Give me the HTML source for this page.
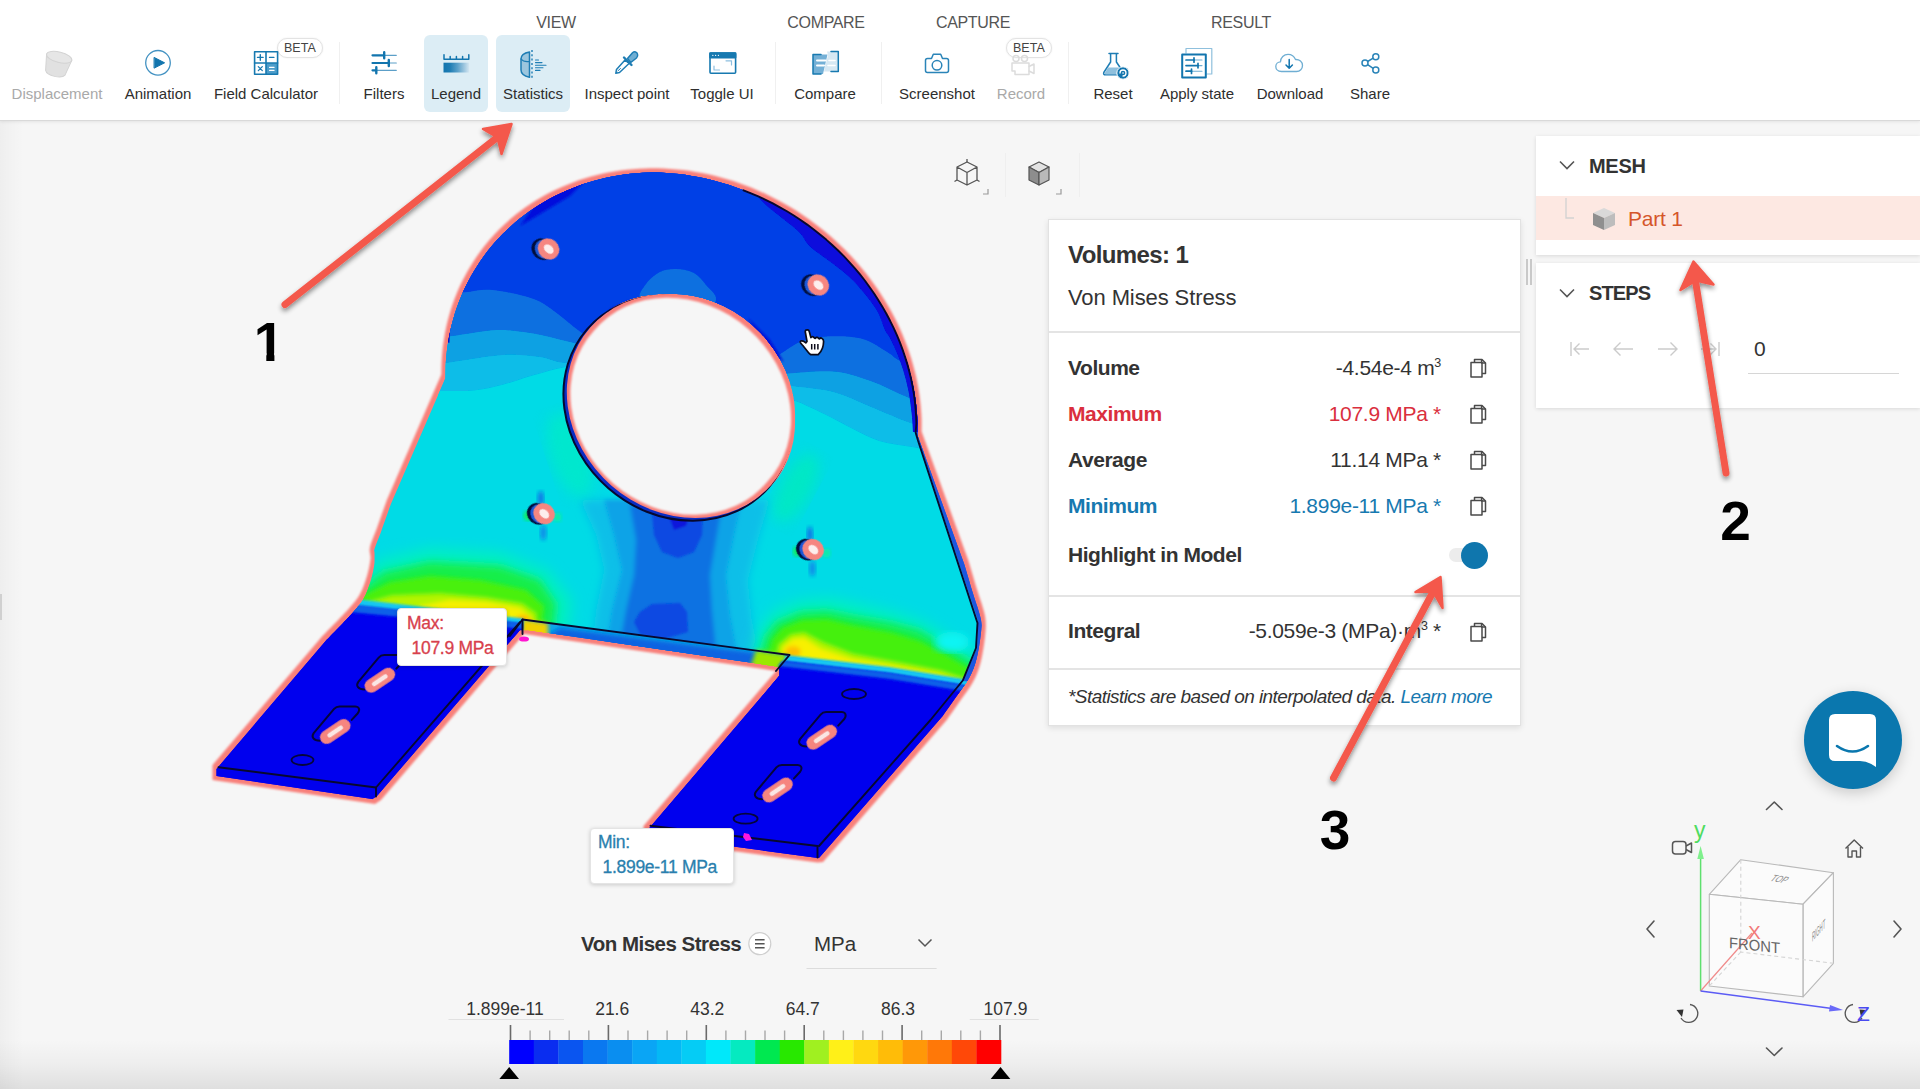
<!DOCTYPE html>
<html lang="en">
<head>
<meta charset="utf-8">
<title>Statistics - Von Mises Stress</title>
<style>
*{box-sizing:border-box;margin:0;padding:0}
html,body{width:1920px;height:1089px;overflow:hidden}
body{position:relative;background:#f6f6f6;font-family:"Liberation Sans",Arial,sans-serif;color:#333}
.abs{position:absolute}
#bgfade{position:absolute;left:0;top:0;width:1920px;height:1089px;
 background:linear-gradient(to bottom,rgba(0,0,0,0) 0,rgba(0,0,0,0) 1040px,rgba(0,0,0,.035) 1065px,rgba(0,0,0,.095) 1089px),
 linear-gradient(to right,rgba(0,0,0,.03) 0,rgba(0,0,0,.012) 14px,rgba(0,0,0,0) 24px)}
/* toolbar */
#tb{position:absolute;left:0;top:0;width:1920px;height:121px;background:#fff;border-bottom:1px solid #d9d9d9;box-shadow:0 1px 3px rgba(0,0,0,.08)}
.gt{position:absolute;top:13px;font-size:16px;line-height:20px;color:#555;letter-spacing:-.35px;white-space:nowrap;transform:translateX(-50%)}
.tl{position:absolute;top:84px;font-size:15px;line-height:20px;color:#2e2e2e;white-space:nowrap;transform:translateX(-50%)}
.tl.dis{color:#a9a9a9}
.sep{position:absolute;top:42px;width:1px;height:62px;background:#f0f0f0}
.hl{position:absolute;top:35px;height:77px;background:#dcedf5;border-radius:6px}
.beta{position:absolute;height:20px;border:1px solid #e3e3e3;border-radius:10px;background:#fff;font-size:12.5px;line-height:18px;color:#444;padding:0 6px;box-shadow:0 0 2px rgba(0,0,0,.08)}
.ico{position:absolute}
</style>
</head>
<body>
<div id="bgfade"></div>

<!-- ============ TOOLBAR ============ -->
<div id="tb">
  <div class="gt" style="left:556px">VIEW</div>
  <div class="gt" style="left:826px">COMPARE</div>
  <div class="gt" style="left:973px">CAPTURE</div>
  <div class="gt" style="left:1241px">RESULT</div>

  <div class="hl" style="left:424px;width:64px"></div>
  <div class="hl" style="left:496px;width:74px"></div>

  <div class="sep" style="left:339px"></div>
  <div class="sep" style="left:775px"></div>
  <div class="sep" style="left:881px"></div>
  <div class="sep" style="left:1068px"></div>

  <div class="tl dis" style="left:57px">Displacement</div>
  <div class="tl" style="left:158px">Animation</div>
  <div class="tl" style="left:266px">Field Calculator</div>
  <div class="tl" style="left:384px">Filters</div>
  <div class="tl" style="left:456px">Legend</div>
  <div class="tl" style="left:533px">Statistics</div>
  <div class="tl" style="left:627px">Inspect point</div>
  <div class="tl" style="left:722px">Toggle UI</div>
  <div class="tl" style="left:825px">Compare</div>
  <div class="tl" style="left:937px">Screenshot</div>
  <div class="tl dis" style="left:1021px">Record</div>
  <div class="tl" style="left:1113px">Reset</div>
  <div class="tl" style="left:1197px">Apply state</div>
  <div class="tl" style="left:1290px">Download</div>
  <div class="tl" style="left:1370px">Share</div>
  <div class="beta" style="left:277px;top:38px">BETA</div>
<div class="beta" style="left:1006px;top:38px">BETA</div>
<svg class="abs" style="left:0;top:30px" width="1420" height="60" viewBox="0 30 1420 60" fill="none" stroke-linejoin="round" stroke-linecap="round">
  <!-- Displacement (disabled) -->
  <g transform="rotate(14 57.500 64)">
    <path d="M44.500 57 L47.500 73 C50 78 65 78 67.500 73 L70.500 57Z" fill="#e1e1e1" stroke="#d3d3d3" stroke-width="1"/>
    <ellipse cx="57.500" cy="57" rx="13" ry="5.200" fill="#e6e6e6" stroke="#d3d3d3" stroke-width="1"/>
  </g>
  <!-- Animation -->
  <circle cx="158" cy="62.800" r="12.300" stroke="#4392c2" stroke-width="1.300" fill="#fff"/>
  <path d="M154.400 57.600 L164.600 62.800 L154.400 68Z" fill="#1275ae" stroke="#1275ae" stroke-width="1"/>
  <!-- Field calculator -->
  <g stroke="#1779b0" stroke-width="1.600">
    <rect x="266" y="63" width="11.600" height="11.300" fill="#4d9dca" stroke="none"/>
    <rect x="254.600" y="51.700" width="23" height="22.600"/>
    <path d="M266 51.700 V74.300 M254.600 63 H277.600"/>
    <path d="M257.500 57.400 h5.600 M260.300 54.600 v5.600 M269.500 57.400 h4.400" stroke-width="1.400"/>
    <path d="M258.300 66.600 l4 4 M262.300 66.600 l-4 4" stroke-width="1.300"/>
    <path d="M269.500 67.300 h4.600 M269.500 70.300 h4.600" stroke="#fff" stroke-width="1.200"/>
  </g>
  <!-- Filters -->
  <g stroke="#1275ae">
    <path d="M384 55.300 H396.300 M389 63 H396.300 M376.500 70.300 H396.300" stroke="#5c9fc8" stroke-width="1.200"/>
    <path d="M372.500 55.300 H384 M372.500 63 H388.500 M372.500 70.300 H376" stroke-width="2.200"/>
    <path d="M384.200 52.300 V58.300 M388.800 60 V66 M376.300 67.300 V73.300" stroke-width="2.400"/>
  </g>
  <!-- Legend -->
  <defs><linearGradient id="lgd" x1="0" x2="1" y1="0" y2="0"><stop offset="0" stop-color="#1275ae"/><stop offset=".25" stop-color="#1e7db4"/><stop offset=".55" stop-color="#5aa0c9"/><stop offset=".85" stop-color="#a9cde3"/><stop offset="1" stop-color="#d3e6f1"/></linearGradient></defs>
  <rect x="443.500" y="62.700" width="25.600" height="9.800" fill="url(#lgd)"/>
  <path d="M444 54.700 V59.300 H468.800 V54.700 M450.200 56.500 V59.300 M456.400 56.500 V59.300 M462.600 56.500 V59.300" stroke="#1275ae" stroke-width="1.500"/>
  <!-- Statistics -->
  <g stroke="#1e7db4">
    <path d="M529.500 52 C524 53 521 56 521 59 V70 C521 73.500 524 76 529.500 77.300Z" fill="#9cc6de" stroke-width="1.500"/>
    <path d="M521 59 C523 61.500 526.500 62 529.500 61.500" stroke-width="1.200"/>
    <path d="M532 50 V80" stroke-width="1.400" stroke-dasharray="2 2.300" stroke-linecap="butt"/>
    <path d="M535.500 60 H538.500 M535.500 62.600 H542 M535.500 65.200 H546 M535.500 67.800 H543 M535.500 70.400 H540" stroke-width="1.100"/>
  </g>
  <!-- Inspect point (eyedropper) -->
  <g stroke="#1e7db4" stroke-width="1.500">
    <path d="M625 60 L616.500 69.500 L615.800 73.300 L619.500 72.500 L629 63.500Z" fill="#fff"/>
    <path d="M618 70.800 L620.500 68.500" stroke-width="1"/>
    <path d="M624 57.500 L631.500 65" stroke-width="2.400"/>
    <path d="M627.500 58.500 L632.500 52.800 C634.500 51 637 52 637.500 54 C638 55.500 637.500 57 636.500 58 L630.800 62.500Z" fill="#6faed3"/>
  </g>
  <!-- Toggle UI -->
  <g stroke="#1779b0" stroke-width="1.600">
    <rect x="710" y="53" width="25.600" height="20.300" rx="1"/>
    <rect x="710" y="53" width="25.600" height="4.600" fill="#1779b0"/>
    <path d="M712.800 55.300 h.1 M715.600 55.300 h.1 M718.400 55.300 h.1" stroke="#fff" stroke-width="1.300"/>
    <path d="M726 60.800 H731.500 V65 M719.500 70 H714 V66" stroke="#8dbfe0" stroke-width="1.200"/>
  </g>
  <!-- Compare -->
  <g stroke="#1779b0" stroke-width="1.500">
    <path d="M827 51.500 H838.300 V71.500 H824 L828 55Z" fill="#d6e8f3" stroke="none"/>
    <path d="M813 54.500 H827.500 L823 74 H813Z" fill="#74b0d6" stroke="none"/>
    <path d="M831 51.500 H838.300 V71.500 H831 M821 74 H813 V54.500 H821"/>
    <path d="M817 60.500 H825.500 M817 65.500 H824" stroke="#fff" stroke-width="2"/>
    <path d="M829 60.500 H835 M828 65.500 H835" stroke="#fff" stroke-width="1.600"/>
  </g>
  <!-- Screenshot -->
  <g stroke="#2a84b8" stroke-width="1.500">
    <path d="M927.500 58.500 H931.500 L933.300 54.300 H940.700 L942.500 58.500 H946.500 Q948.500 58.500 948.500 60.500 V70.500 Q948.500 72.500 946.500 72.500 H927.500 Q925.500 72.500 925.500 70.500 V60.500 Q925.500 58.500 927.500 58.500Z" fill="#fff"/>
    <circle cx="937" cy="65.300" r="4.800"/>
  </g>
  <!-- Record (disabled) -->
  <g stroke="#dcdcdc" stroke-width="1.500">
    <path d="M1012 63 H1029 V74.500 H1015 V71 H1012Z" fill="#fff"/>
    <path d="M1029 66.500 L1034 64 V73.500 L1029 71"/>
    <circle cx="1016" cy="58.500" r="3"/><circle cx="1024.500" cy="58.500" r="3"/>
  </g>
  <!-- Reset -->
  <g stroke="#1e7db4" stroke-width="1.500">
    <path d="M1110.600 54 V62 L1103.800 72.500 Q1103 74.800 1105.500 74.800 H1122 Q1124.500 74.800 1123.500 72.500 L1116.400 62 V54" fill="#fff"/>
    <path d="M1108 67.500 H1119.500 L1123 73.500 L1122 74.500 H1105.500 L1104.500 73.500Z" fill="#8fc0dd" stroke="none"/>
    <path d="M1109 53.600 H1118"/>
    <circle cx="1123" cy="73" r="6.200" fill="#1275ae" stroke="#fff" stroke-width="1"/>
    <path d="M1120 73 A3 3 0 1 1 1123 76" stroke="#fff" stroke-width="1.300"/>
    <path d="M1123 73 h.1" stroke="#fff" stroke-width="1.600"/>
  </g>
  <!-- Apply state -->
  <g>
    <path d="M1186 53 V48.500 H1211.800 V74 H1207" stroke="#8fc0dd" stroke-width="1.200"/>
    <rect x="1182.200" y="54.500" width="23.600" height="23" stroke="#1275ae" stroke-width="2" fill="#fff"/>
    <path d="M1194 60 H1202 M1198.500 65.600 H1202 M1192 71.200 H1202" stroke="#6faed3" stroke-width="1.100"/>
    <path d="M1186 60 H1194 M1186 65.600 H1198 M1186 71.200 H1191.500" stroke="#1275ae" stroke-width="1.700"/>
    <path d="M1194 57.800 V62.200 M1198 63.400 V67.800 M1191.500 69 V73.400" stroke="#1275ae" stroke-width="1.700"/>
  </g>
  <!-- Download -->
  <g>
    <path d="M1281.500 71.500 C1277.500 71.500 1275.800 68.800 1275.800 66.500 C1275.800 63.800 1278 61.800 1280.500 61.800 C1280.500 57.500 1284 54.300 1288 54.300 C1291.500 54.300 1294.300 56.300 1295.500 59.500 C1299.500 59.300 1302.500 62 1302.500 65.500 C1302.500 68.800 1300 71.500 1296.500 71.500Z" stroke="#6faed3" stroke-width="1.300" fill="#fff"/>
    <path d="M1289.200 59.500 V68 M1286 65 L1289.200 68.300 L1292.400 65" stroke="#1275ae" stroke-width="1.500"/>
  </g>
  <!-- Share -->
  <g stroke="#2a84b8" stroke-width="1.500">
    <path d="M1367.600 61.500 L1373.200 58.200 M1367.600 64.600 L1373.200 68.400"/>
    <circle cx="1375.800" cy="56.700" r="3" fill="#fff"/><circle cx="1365" cy="63" r="3" fill="#fff"/><circle cx="1375.800" cy="70" r="3" fill="#fff"/>
  </g>
</svg>

</div>

<svg class="abs" style="left:0;top:0" width="1920" height="1089" viewBox="0 0 1920 1089">
<defs>
<clipPath id="silclip"><path d="M441.3 374.4 C441.4 372.4 441.4 366.3 441.6 362.3 C441.8 358.3 442.1 354.3 442.5 350.3 C442.9 346.3 443.4 342.3 444.1 338.4 C444.7 334.5 445.4 330.6 446.3 326.7 C447.1 322.8 448.1 319.0 449.2 315.2 C450.3 311.4 451.4 307.7 452.7 304.0 C454.0 300.2 455.4 296.6 456.9 293.0 C458.4 289.3 460.0 285.8 461.7 282.3 C463.4 278.8 465.2 275.3 467.1 271.9 C469.0 268.5 471.1 265.2 473.2 261.9 C475.3 258.6 477.5 255.4 479.8 252.3 C482.0 249.1 484.4 246.0 486.9 243.0 C489.4 240.0 492.0 237.1 494.6 234.3 C497.3 231.4 500.0 228.6 502.8 226.0 C505.7 223.3 508.6 220.6 511.6 218.1 C514.6 215.6 517.6 213.2 520.8 210.8 C523.9 208.4 527.1 206.2 530.4 204.0 C533.7 201.8 537.1 199.7 540.5 197.8 C543.9 195.8 547.4 193.9 550.9 192.1 C554.5 190.3 558.1 188.6 561.8 187.0 C565.4 185.4 569.1 183.8 572.9 182.4 C576.7 181.0 580.5 179.7 584.4 178.5 C588.2 177.3 592.2 176.2 596.1 175.2 C600.1 174.3 604.0 173.4 608.1 172.6 C612.1 171.8 616.2 171.1 620.2 170.6 C624.3 170.0 628.4 169.5 632.6 169.2 C636.7 168.8 640.9 168.6 645.1 168.4 C649.2 168.3 653.4 168.2 657.6 168.3 C661.9 168.4 666.1 168.6 670.3 168.9 C674.5 169.1 678.8 169.5 683.0 170.0 C687.2 170.5 691.4 171.2 695.7 171.9 C699.9 172.6 704.1 173.4 708.3 174.3 C712.5 175.3 716.7 176.3 720.9 177.4 C725.0 178.6 729.2 179.8 733.3 181.1 C737.4 182.5 741.5 183.9 745.6 185.5 C749.7 187.0 753.7 188.7 757.7 190.4 C761.7 192.1 765.7 194.0 769.7 195.9 C773.6 197.8 777.5 199.9 781.3 202.0 C785.2 204.1 789.0 206.3 792.7 208.6 C796.5 210.9 800.2 213.3 803.8 215.8 C807.4 218.2 811.0 220.8 814.5 223.4 C818.1 226.1 821.5 228.8 824.9 231.6 C828.3 234.4 831.6 237.3 834.9 240.2 C838.1 243.2 841.3 246.2 844.4 249.3 C847.5 252.4 850.6 255.6 853.5 258.8 C856.5 262.0 859.3 265.3 862.1 268.7 C864.9 272.1 867.6 275.5 870.2 279.0 C872.8 282.4 875.4 286.0 877.8 289.6 C880.2 293.1 882.6 296.8 884.8 300.5 C887.1 304.1 889.2 307.9 891.3 311.6 C893.4 315.4 895.3 319.2 897.2 323.1 C899.0 326.9 900.8 330.8 902.5 334.7 C904.1 338.6 905.7 342.6 907.1 346.5 C908.6 350.5 909.9 354.5 911.2 358.5 C912.4 362.5 913.5 366.5 914.5 370.6 C915.6 374.6 916.5 378.7 917.3 382.8 C918.1 386.8 918.8 390.9 919.4 395.0 C920.0 399.0 920.4 403.1 920.8 407.2 C921.2 411.3 921.4 415.3 921.6 419.4 C921.7 423.5 921.6 429.5 921.6 431.6 L968.2 560.0 C969.7 564.9 974.2 580.2 977.0 589.5 C979.8 598.8 983.7 608.2 985.0 616.0 C986.3 623.8 985.8 628.7 985.0 636.5 C984.2 644.3 982.5 655.4 980.5 663.0 C978.5 670.6 976.4 675.7 973.0 682.0 C969.6 688.3 964.4 694.7 960.0 701.0 C955.6 707.3 948.9 716.8 946.7 720.0 L823.0 862.0 L817.5 862.5 L644.0 839.0 L643.5 826.0 L776.0 671.0 L524.0 634.0 L381.0 800.0 L375.0 804.0 L212.5 780.0 L212.5 765.0 L322.0 636.6 C326.4 632.0 342.2 616.1 348.5 609.0 C354.8 601.9 356.9 599.5 360.0 594.0 C363.1 588.5 365.2 581.8 367.0 576.0 C368.8 570.2 370.0 563.8 370.5 559.0 C371.0 554.2 368.8 552.4 370.0 547.0 C371.2 541.6 374.7 534.2 377.5 526.4 C380.3 518.6 385.3 504.4 386.9 500.0 L441.3 374.4Z M767.5 481.6 A115.0 100.5 41.0 1 0 593.9 330.8 A115.0 100.5 41.0 1 0 767.5 481.6 Z" clip-rule="evenodd"/></clipPath>
<filter id="erode" x="180" y="140" width="840" height="760" filterUnits="userSpaceOnUse"><feMorphology in="SourceAlpha" operator="erode" radius="4.0" result="e"/><feGaussianBlur in="e" stdDeviation="0.6" result="eb"/><feComposite in="SourceGraphic" in2="eb" operator="in"/></filter>
<filter id="b06"><feGaussianBlur stdDeviation="0.7"/></filter>
<filter id="b1"><feGaussianBlur stdDeviation="1.2"/></filter>
<filter id="b2"><feGaussianBlur stdDeviation="2.2"/></filter>
<filter id="b4"><feGaussianBlur stdDeviation="4"/></filter>
<filter id="b7"><feGaussianBlur stdDeviation="7"/></filter>
<filter id="b12"><feGaussianBlur stdDeviation="12"/></filter>
</defs>
<path d="M441.3 374.4 C441.4 372.4 441.4 366.3 441.6 362.3 C441.8 358.3 442.1 354.3 442.5 350.3 C442.9 346.3 443.4 342.3 444.1 338.4 C444.7 334.5 445.4 330.6 446.3 326.7 C447.1 322.8 448.1 319.0 449.2 315.2 C450.3 311.4 451.4 307.7 452.7 304.0 C454.0 300.2 455.4 296.6 456.9 293.0 C458.4 289.3 460.0 285.8 461.7 282.3 C463.4 278.8 465.2 275.3 467.1 271.9 C469.0 268.5 471.1 265.2 473.2 261.9 C475.3 258.6 477.5 255.4 479.8 252.3 C482.0 249.1 484.4 246.0 486.9 243.0 C489.4 240.0 492.0 237.1 494.6 234.3 C497.3 231.4 500.0 228.6 502.8 226.0 C505.7 223.3 508.6 220.6 511.6 218.1 C514.6 215.6 517.6 213.2 520.8 210.8 C523.9 208.4 527.1 206.2 530.4 204.0 C533.7 201.8 537.1 199.7 540.5 197.8 C543.9 195.8 547.4 193.9 550.9 192.1 C554.5 190.3 558.1 188.6 561.8 187.0 C565.4 185.4 569.1 183.8 572.9 182.4 C576.7 181.0 580.5 179.7 584.4 178.5 C588.2 177.3 592.2 176.2 596.1 175.2 C600.1 174.3 604.0 173.4 608.1 172.6 C612.1 171.8 616.2 171.1 620.2 170.6 C624.3 170.0 628.4 169.5 632.6 169.2 C636.7 168.8 640.9 168.6 645.1 168.4 C649.2 168.3 653.4 168.2 657.6 168.3 C661.9 168.4 666.1 168.6 670.3 168.9 C674.5 169.1 678.8 169.5 683.0 170.0 C687.2 170.5 691.4 171.2 695.7 171.9 C699.9 172.6 704.1 173.4 708.3 174.3 C712.5 175.3 716.7 176.3 720.9 177.4 C725.0 178.6 729.2 179.8 733.3 181.1 C737.4 182.5 741.5 183.9 745.6 185.5 C749.7 187.0 753.7 188.7 757.7 190.4 C761.7 192.1 765.7 194.0 769.7 195.9 C773.6 197.8 777.5 199.9 781.3 202.0 C785.2 204.1 789.0 206.3 792.7 208.6 C796.5 210.9 800.2 213.3 803.8 215.8 C807.4 218.2 811.0 220.8 814.5 223.4 C818.1 226.1 821.5 228.8 824.9 231.6 C828.3 234.4 831.6 237.3 834.9 240.2 C838.1 243.2 841.3 246.2 844.4 249.3 C847.5 252.4 850.6 255.6 853.5 258.8 C856.5 262.0 859.3 265.3 862.1 268.7 C864.9 272.1 867.6 275.5 870.2 279.0 C872.8 282.4 875.4 286.0 877.8 289.6 C880.2 293.1 882.6 296.8 884.8 300.5 C887.1 304.1 889.2 307.9 891.3 311.6 C893.4 315.4 895.3 319.2 897.2 323.1 C899.0 326.9 900.8 330.8 902.5 334.7 C904.1 338.6 905.7 342.6 907.1 346.5 C908.6 350.5 909.9 354.5 911.2 358.5 C912.4 362.5 913.5 366.5 914.5 370.6 C915.6 374.6 916.5 378.7 917.3 382.8 C918.1 386.8 918.8 390.9 919.4 395.0 C920.0 399.0 920.4 403.1 920.8 407.2 C921.2 411.3 921.4 415.3 921.6 419.4 C921.7 423.5 921.6 429.5 921.6 431.6 L968.2 560.0 C969.7 564.9 974.2 580.2 977.0 589.5 C979.8 598.8 983.7 608.2 985.0 616.0 C986.3 623.8 985.8 628.7 985.0 636.5 C984.2 644.3 982.5 655.4 980.5 663.0 C978.5 670.6 976.4 675.7 973.0 682.0 C969.6 688.3 964.4 694.7 960.0 701.0 C955.6 707.3 948.9 716.8 946.7 720.0 L823.0 862.0 L817.5 862.5 L644.0 839.0 L643.5 826.0 L776.0 671.0 L524.0 634.0 L381.0 800.0 L375.0 804.0 L212.5 780.0 L212.5 765.0 L322.0 636.6 C326.4 632.0 342.2 616.1 348.5 609.0 C354.8 601.9 356.9 599.5 360.0 594.0 C363.1 588.5 365.2 581.8 367.0 576.0 C368.8 570.2 370.0 563.8 370.5 559.0 C371.0 554.2 368.8 552.4 370.0 547.0 C371.2 541.6 374.7 534.2 377.5 526.4 C380.3 518.6 385.3 504.4 386.9 500.0 L441.3 374.4Z M767.5 481.6 A115.0 100.5 41.0 1 0 593.9 330.8 A115.0 100.5 41.0 1 0 767.5 481.6 Z" fill="#f8807a" fill-rule="evenodd" filter="url(#b1)"/>
<g filter="url(#erode)"><g clip-path="url(#silclip)">
<rect x="180" y="140" width="840" height="760" fill="#00dbe6"/>
<path d="M420.0 392.0 C424.2 391.8 436.0 391.2 445.0 391.0 C454.0 390.8 464.3 391.6 474.0 390.5 C483.7 389.4 493.3 387.1 503.0 384.7 C512.7 382.2 521.5 378.8 532.0 375.8 C542.5 372.9 554.7 368.8 566.0 367.0 C577.3 365.2 594.3 365.3 600.0 365.0 L780.0 400.0 C782.5 400.2 787.7 398.7 795.0 401.0 C802.3 403.3 814.5 409.4 824.0 414.0 C833.5 418.6 842.8 424.1 852.0 428.6 C861.2 433.1 869.0 437.9 879.0 441.0 C889.0 444.1 901.0 445.2 912.0 447.0 C923.0 448.8 939.5 451.2 945.0 452.0 L1020 140 L180 140Z" fill="#07bde8" filter="url(#b06)"/>
<path d="M425.0 365.0 C428.9 364.6 435.5 364.3 448.5 362.6 C461.5 360.9 487.8 355.9 503.0 355.0 C518.2 354.1 530.2 355.7 540.0 357.0 C549.8 358.3 551.6 361.1 561.6 362.6 C571.6 364.1 593.6 365.4 600.0 366.0 L780.0 385.0 C782.0 385.2 783.1 384.8 792.0 386.0 C800.9 387.2 820.5 388.6 833.5 392.0 C846.5 395.4 857.1 401.3 870.0 406.5 C882.9 411.7 898.1 418.8 910.6 423.0 C923.1 427.2 939.3 430.5 945.0 432.0 L1020 140 L180 140Z" fill="#08a1e3" filter="url(#b06)"/>
<path d="M430.0 338.0 C433.7 337.7 440.8 337.3 452.0 336.0 C463.2 334.7 483.4 330.4 497.0 330.0 C510.6 329.6 521.8 331.7 533.6 333.6 C545.4 335.5 556.9 338.9 568.0 341.6 C579.1 344.3 594.7 348.6 600.0 350.0 L775.0 374.0 C777.1 373.9 777.8 373.9 787.5 373.5 C797.2 373.1 819.8 370.4 833.5 371.6 C847.2 372.8 857.8 376.6 870.0 380.8 C882.2 385.0 894.5 392.1 907.0 397.0 C919.5 401.9 938.7 407.8 945.0 410.0 L1020 140 L180 140Z" fill="#086fe0" filter="url(#b06)"/>
<path d="M440.0 295.0 C444.1 294.6 456.1 293.1 464.8 292.3 C473.5 291.5 480.8 288.9 492.3 290.0 C503.8 291.1 522.9 295.2 533.6 299.0 C544.3 302.8 549.0 307.6 556.6 313.0 C564.2 318.4 572.3 326.0 579.5 331.3 C586.7 336.6 596.6 342.7 600.0 345.0 L765.0 360.0 C767.2 359.2 772.6 358.0 778.4 355.0 C784.2 352.0 792.4 345.1 800.0 342.0 C807.6 338.9 813.8 337.3 824.0 336.7 C834.2 336.1 850.2 335.9 861.0 338.6 C871.8 341.3 882.1 349.3 888.6 353.0 C895.1 356.7 890.6 355.7 900.0 361.0 C909.4 366.3 937.5 381.0 945.0 385.0 L1020 140 L180 140Z" fill="#0540e6" filter="url(#b06)"/>
<path d="M640.0 300.0 C637.7 294.0 642.7 288.7 646.0 284.0 C649.3 279.3 655.0 274.5 660.0 272.0 C665.0 269.5 670.3 268.8 676.0 269.0 C681.7 269.2 689.0 270.3 694.0 273.0 C699.0 275.7 702.3 280.5 706.0 285.0 C709.7 289.5 717.0 294.2 716.0 300.0 C715.0 305.8 709.3 316.7 700.0 320.0 C690.7 323.3 670.0 323.3 660.0 320.0 C650.0 316.7 642.3 306.0 640.0 300.0Z" fill="#0a6fe0" filter="url(#b06)"/>
<path d="M596 322 L612 308 L630 300 L615 320Z" fill="#0510d8" filter="url(#b1)"/>
<path d="M748 318 L770 340 L784 362 L765 350Z" fill="#0510d8" filter="url(#b1)"/>
<path d="M548 186 L590 176 L570 196 L520 226 Z" fill="#0510dc" filter="url(#b1)"/>
<g filter="url(#b4)">
<path d="M580 500 L770 500 L758 540 L748 580 L752 620 L764 680 L590 660 L596 610 L604 570 L596 535Z" fill="#08bfe8"/>
</g>
<g filter="url(#b2)">
<path d="M604 500 L742 500 L734 535 L726 575 L730 615 L742 680 L604 660 L612 610 L622 570 L614 535Z" fill="#08a3e7"/>
<path d="M630 505 L722 505 L716 540 L710 575 L712 610 L718 670 L618 655 L626 610 L634 575 L636 540Z" fill="#0a72e2"/>
</g>
<g filter="url(#b1)">
<path d="M652 512 L703 514 L702 535 L694 552 L678 558 L662 552 L654 535Z" fill="#0a48e2"/>
<path d="M668 514 L690 514 L686 526 L674 530Z" fill="#0a18dc"/>
<path d="M640 612 L652 604 L680 603 L687 612 L688 632 L660 640 L640 634 L634 622Z" fill="#0a48e2"/>
</g>
<ellipse cx="796" cy="488" rx="16" ry="38" transform="rotate(28 796 488)" fill="#00eac0" opacity=".85" filter="url(#b7)"/>
<ellipse cx="570" cy="455" rx="20" ry="44" transform="rotate(-18 570 455)" fill="#00eac8" opacity=".8" filter="url(#b7)"/>
<g filter="url(#b7)">
<path d="M350 590 L378 560 L430 548 L500 552 L548 570 L572 600 L566 650 L330 640Z" fill="#00f0c0"/>
</g>
<g filter="url(#b4)">
<path d="M352 596 L384 572 L430 562 L500 566 L540 580 L556 604 L552 640 L330 640Z" fill="#14ee48"/>
</g>
<g filter="url(#b2)">
<path d="M354 600 L390 582 L430 576 L480 580 L526 590 L544 606 L540 640 L330 640Z" fill="#48f010"/>
<path d="M356 606 L392 596 L440 594 L486 598 L522 604 L536 614 L532 640 L340 640Z" fill="#b4f400"/>
<path d="M420 606 L450 600 L486 602 L520 608 L532 618 L528 640 L400 640Z" fill="#f6f000"/>
<ellipse cx="523" cy="622" rx="8" ry="7" fill="#ffb400"/>
</g>
<g filter="url(#b7)">
<path d="M752 652 L760 628 L774 610 L800 600 L830 598 L860 604 L895 612 L925 622 L962 645 L990 660 L990 700 L760 690Z" fill="#00f0c0"/>
</g>
<g filter="url(#b4)">
<path d="M760 654 L766 636 L776 622.4 L801.4 612 L827 610.8 L852.8 616 L890 622.4 L918.6 630 L957 653 L975 664 L990 672 L990 700 L760 690Z" fill="#14ee48"/>
</g>
<g filter="url(#b2)">
<path d="M768 656 L772 640 L782 628 L802 620 L827 619 L852 625 L890 632 L920 641 L955 660 L975 672 L975 700 L770 690Z" fill="#44f010"/>
<path d="M777 658 L779 645 L791 635 L804 633 L823 643 L853 654.500 L890 661.500 L940 671 L968 680 L968 700 L776 690Z" fill="#b4f400"/>
<path d="M781 660 L783 647 L793 639 L804 638 L821 649 L852.800 659.500 L890 665.300 L940 674.300 L962 681.500 L962 700 L780 690Z" fill="#f8f000"/>
<ellipse cx="793" cy="652" rx="8" ry="6" fill="#ffc000"/>
</g>
<ellipse cx="952" cy="642" rx="17" ry="10" fill="#10f4f4" filter="url(#b4)"/>
<path d="M522.5 619.5 L789.5 655 L776 672 L522.5 636Z" fill="#08a8e8"/>
<path d="M560 628 L789.5 657 L776 672 L540 640Z" fill="#0a58e0" filter="url(#b2)" opacity=".85"/>
<path d="M522 619 L548 623 L548 640 L522 636Z" fill="#f0d000" filter="url(#b2)"/>
<path d="M756 650 L789.5 655 L776 672 L750 668Z" fill="#9be800" filter="url(#b2)"/>
<path d="M300 592 L360.2 601.4 L397 608 L523 620.5 L523 640 L400 810 L200 810 L200 700Z" fill="#0303ee"/>
<path d="M352 598.5 L523 618.5 L523 624 L352 606Z" fill="#18c8f0" filter="url(#b1)"/>
<path d="M350 604 L523 623 L523 629 L350 612Z" fill="#0a60e8" filter="url(#b1)"/>
<path d="M789.8 657 L890 668.7 L960 680 L1000 690 L1000 900 L600 900 L640 830 L776 670Z" fill="#0303ee"/>
<path d="M786 655 L890 667 L960 678.300 L980 683.300 L980 689.500 L960 684.500 L890 673.200 L784 661Z" fill="#18c8f0" filter="url(#b1)"/>
<path d="M782 661 L890 673 L960 684.500 L980 689.500 L980 696 L960 690.500 L890 679 L778 666Z" fill="#0a60e8" filter="url(#b1)"/>
<path d="M905 352 L913 380 L916 432 L978 621 L977 648 L963 681 L1000 684 L1000 340Z" fill="#1a56e0"/>
<path d="M860 262 L885 300 L903 344 L912 380 L915 425 L930 425 L930 262Z" fill="#0a14d4"/>
<path d="M443.4 342.6 A250.0 221.0 36.4 1 1 921.6 431.6" fill="none" stroke="#0606c8" stroke-width="12.2" opacity=".9"/>
<path d="M735.0 150.0 C736.7 154.7 741.7 170.8 745.0 178.0 C748.3 185.2 751.5 188.5 755.0 193.0 C758.5 197.5 762.3 201.5 766.0 205.0 C769.7 208.5 771.5 209.5 777.0 214.0 C782.5 218.5 793.5 226.6 799.0 232.0 C804.5 237.4 804.5 241.2 810.0 246.4 C815.5 251.6 824.7 257.1 832.0 263.0 C839.3 268.9 846.7 273.9 854.0 281.6 C861.3 289.3 870.8 300.9 876.0 309.0 C881.2 317.1 882.7 325.2 885.0 330.0 C887.3 334.8 888.0 334.2 890.0 338.0 C892.0 341.8 894.8 347.7 897.0 353.0 C899.2 358.3 901.1 363.4 903.0 369.6 C904.9 375.9 906.9 383.1 908.4 390.5 C909.9 397.9 910.9 406.8 911.7 413.7 C912.5 420.6 912.8 428.9 913.0 432.0 L945 432 L945 150 L735 150Z" fill="#0808dc" filter="url(#b06)"/>
<path d="M700 172 C 790 185 880 250 913 380 L 930 380 L 930 150 L 700 150Z" fill="none"/>
</g></g>
<g fill="none" stroke="#08082e" stroke-width="1.9" stroke-linecap="round" stroke-linejoin="round">
<path d="M743.5 190.3 L751.0 193.3 L758.3 196.4 L765.6 199.8 L772.8 203.4 L779.9 207.3 L786.9 211.3 L793.8 215.5 L800.6 220.0 L807.2 224.6 L813.7 229.4 L820.0 234.4 L826.2 239.6 L832.2 245.0 L838.1 250.5 L843.8 256.2 L849.3 262.1 L854.7 268.1 L859.8 274.2 L864.8 280.5 L869.5 287.0 L874.1 293.5 L878.4 300.2 L882.5 306.9 L886.4 313.8 L890.1 320.8 L893.6 327.8 L896.8 334.9 L899.8 342.1 L902.5 349.4 L905.0 356.7 L907.3 364.1 L909.3 371.5 L911.1 378.9 L912.6 386.4 L913.9 393.9 L914.9 401.3 L915.6 408.8 L916.1 416.3 L916.4 423.7 L915.6 432.5 L918 440.5 L977.5 623 L976 648 L962.8 680.5 L930.5 720 L819 846"/>
<path d="M510 636 L522.5 619.5 L789.5 655 L776 671"/>
<path d="M522.5 619.5 L522.5 634"/>
<path d="M218.500 767.200 L376 787.500 L376 796.500"/>
<path d="M376 787.5 L520 622"/>
<path d="M650.500 825.800 L817.500 846 L817.500 857.500"/>
</g>
<clipPath id="outhole"><path d="M180 140 H1020 V900 H180Z M771.2 484.9 A119.9 105.4 41.0 1 0 590.2 327.5 A119.9 105.4 41.0 1 0 771.2 484.9 Z" clip-rule="evenodd"/></clipPath>
<g clip-path="url(#outhole)"><path d="M768.8 487.3 A120.4 105.9 41.0 1 0 587.0 329.3 A120.4 105.9 41.0 1 0 768.8 487.3 Z" fill="#0a2cc4" stroke="#06082e" stroke-width="2"/></g>
<g transform="translate(379.8 680.2)">
<path d="M-15.4 9.3 C-21.5 9.3 -24.3 5.5 -21.5 1.6 L-1.1 -22.6 C0.5 -24.5 2.2 -25.1 4.4 -25.1 L19.8 -25.1 C23.7 -25.1 25.3 -22.1 22.6 -18.2 L16.5 -11.6" fill="none" stroke="#05053a" stroke-width="2" stroke-linecap="round"/>
<g transform="rotate(-34)"><rect x="-17" y="-6.800" width="34" height="13.600" rx="6.800" fill="#f6857f" filter="url(#b06)"/><rect x="-9" y="-2.200" width="18" height="4.400" rx="2.200" fill="#fae6e4" filter="url(#b06)"/></g>
</g>
<g transform="translate(335.2 731.5)">
<path d="M-15.4 9.3 C-21.5 9.3 -24.3 5.5 -21.5 1.6 L-1.1 -22.6 C0.5 -24.5 2.2 -25.1 4.4 -25.1 L19.8 -25.1 C23.7 -25.1 25.3 -22.1 22.6 -18.2 L16.5 -11.6" fill="none" stroke="#05053a" stroke-width="2" stroke-linecap="round"/>
<g transform="rotate(-34)"><rect x="-17" y="-6.800" width="34" height="13.600" rx="6.800" fill="#f6857f" filter="url(#b06)"/><rect x="-9" y="-2.200" width="18" height="4.400" rx="2.200" fill="#fae6e4" filter="url(#b06)"/></g>
</g>
<g transform="translate(821.7 737.2)">
<path d="M-15.4 9.3 C-21.5 9.3 -24.3 5.5 -21.5 1.6 L-1.1 -22.6 C0.5 -24.5 2.2 -25.1 4.4 -25.1 L19.8 -25.1 C23.7 -25.1 25.3 -22.1 22.6 -18.2 L16.5 -11.6" fill="none" stroke="#05053a" stroke-width="2" stroke-linecap="round"/>
<g transform="rotate(-34)"><rect x="-17" y="-6.800" width="34" height="13.600" rx="6.800" fill="#f6857f" filter="url(#b06)"/><rect x="-9" y="-2.200" width="18" height="4.400" rx="2.200" fill="#fae6e4" filter="url(#b06)"/></g>
</g>
<g transform="translate(777.5 790.0)">
<path d="M-15.4 9.3 C-21.5 9.3 -24.3 5.5 -21.5 1.6 L-1.1 -22.6 C0.5 -24.5 2.2 -25.1 4.4 -25.1 L19.8 -25.1 C23.7 -25.1 25.3 -22.1 22.6 -18.2 L16.5 -11.6" fill="none" stroke="#05053a" stroke-width="2" stroke-linecap="round"/>
<g transform="rotate(-34)"><rect x="-17" y="-6.800" width="34" height="13.600" rx="6.800" fill="#f6857f" filter="url(#b06)"/><rect x="-9" y="-2.200" width="18" height="4.400" rx="2.200" fill="#fae6e4" filter="url(#b06)"/></g>
</g>
<ellipse cx="302.5" cy="760.0" rx="11.0" ry="5.0" fill="none" stroke="#05053a" stroke-width="1.8"/>
<ellipse cx="854.0" cy="694.0" rx="12.0" ry="5.0" fill="none" stroke="#05053a" stroke-width="1.8"/>
<ellipse cx="745.6" cy="818.7" rx="12.0" ry="5.0" fill="none" stroke="#05053a" stroke-width="1.8"/>
<g transform="translate(547.8 249.0)">
<ellipse cx="-4.0" cy="3.6" rx="11.4" ry="10.4" transform="rotate(40)" fill="#06103c" filter="url(#b06)"/>
<ellipse cx="-2.4" cy="2.2" rx="10.2" ry="9.2" transform="rotate(40)" fill="#1a58d8" filter="url(#b06)"/>
<ellipse cx="0.6" cy="-0.5" rx="11" ry="10.2" transform="rotate(40)" fill="#f68680" filter="url(#b06)"/>
<ellipse cx="0.8" cy="-0.6" rx="5.6" ry="3.9" transform="rotate(42)" fill="#fdeeed" filter="url(#b06)"/>
</g>
<g transform="translate(817.5 285.0)">
<ellipse cx="-4.0" cy="3.6" rx="11.4" ry="10.4" transform="rotate(40)" fill="#06103c" filter="url(#b06)"/>
<ellipse cx="-2.4" cy="2.2" rx="10.2" ry="9.2" transform="rotate(40)" fill="#1a58d8" filter="url(#b06)"/>
<ellipse cx="0.6" cy="-0.5" rx="11" ry="10.2" transform="rotate(40)" fill="#f68680" filter="url(#b06)"/>
<ellipse cx="0.8" cy="-0.6" rx="5.6" ry="3.9" transform="rotate(42)" fill="#fdeeed" filter="url(#b06)"/>
</g>
<g transform="translate(543.3 513.7)">
<ellipse cx="-2.500" cy="-15" rx="3.200" ry="8" fill="#0a78e6" filter="url(#b2)"/>
<ellipse cx="0" cy="19" rx="3.200" ry="8" fill="#0a8ce8" filter="url(#b2)"/>
<ellipse cx="-15" cy="2" rx="4.500" ry="5" fill="#10ee50" filter="url(#b2)"/>
<ellipse cx="14" cy="3.500" rx="4" ry="4.500" fill="#10eea0" filter="url(#b2)"/>
<ellipse cx="-4.0" cy="3.6" rx="11.4" ry="10.4" transform="rotate(40)" fill="#06103c" filter="url(#b06)"/>
<ellipse cx="-2.4" cy="2.2" rx="10.2" ry="9.2" transform="rotate(40)" fill="#1a58d8" filter="url(#b06)"/>
<ellipse cx="0.6" cy="-0.5" rx="11" ry="10.2" transform="rotate(40)" fill="#f68680" filter="url(#b06)"/>
<ellipse cx="0.8" cy="-0.6" rx="5.6" ry="3.9" transform="rotate(42)" fill="#fdeeed" filter="url(#b06)"/>
</g>
<g transform="translate(812.4 549.5)">
<ellipse cx="-2.500" cy="-15" rx="3.200" ry="8" fill="#0a78e6" filter="url(#b2)"/>
<ellipse cx="0" cy="19" rx="3.200" ry="8" fill="#0a8ce8" filter="url(#b2)"/>
<ellipse cx="-15" cy="2" rx="4.500" ry="5" fill="#10ee50" filter="url(#b2)"/>
<ellipse cx="14" cy="3.500" rx="4" ry="4.500" fill="#10eea0" filter="url(#b2)"/>
<ellipse cx="-4.0" cy="3.6" rx="11.4" ry="10.4" transform="rotate(40)" fill="#06103c" filter="url(#b06)"/>
<ellipse cx="-2.4" cy="2.2" rx="10.2" ry="9.2" transform="rotate(40)" fill="#1a58d8" filter="url(#b06)"/>
<ellipse cx="0.6" cy="-0.5" rx="11" ry="10.2" transform="rotate(40)" fill="#f68680" filter="url(#b06)"/>
<ellipse cx="0.8" cy="-0.6" rx="5.6" ry="3.9" transform="rotate(42)" fill="#fdeeed" filter="url(#b06)"/>
</g>
<ellipse cx="524" cy="639" rx="5" ry="2.6" fill="#ff18d0" filter="url(#b06)"/>
<path d="M744 833 l5 1 l3 6 l-6 1 l-3 -4z" fill="#ff18e0" filter="url(#b06)"/>
</svg>
<style>
#stats{position:absolute;left:1048px;top:219px;width:473px;height:507px;background:#fff;border:1px solid #e2e2e2;box-shadow:0 2px 6px rgba(0,0,0,.10)}
#stats .t{position:absolute;white-space:nowrap;color:#333}
#stats .hr{position:absolute;left:0;width:471px;height:2px;background:#e4e4e4}
#stats .lab{font-weight:bold;font-size:21px;line-height:24px;left:19px;letter-spacing:-.45px}
#stats .val{font-size:21px;line-height:24px;right:79px;letter-spacing:-.3px}
.red{color:#da2f3e !important}.blu{color:#1779b0 !important}
.card{position:absolute;left:1536px;width:384px;background:#fff;box-shadow:0 1px 4px rgba(0,0,0,.12)}
.card .hd{position:absolute;left:53px;font-weight:bold;font-size:20px;line-height:24px;color:#333;letter-spacing:-.3px}
</style>
<div id="stats">
  <div class="t" style="left:19px;top:20px;font-weight:bold;font-size:24px;line-height:30px;letter-spacing:-.6px">Volumes: 1</div>
  <div class="t" style="left:19px;top:63px;font-size:22px;line-height:30px;letter-spacing:-.1px">Von Mises Stress</div>
  <div class="hr" style="top:111px"></div>

  <div class="t lab" style="top:136px">Volume</div>
  <div class="t val" style="top:136px">-4.54e-4 m<span style="font-size:12.5px;position:relative;top:-8px">3</span></div>
  <div class="t lab red" style="top:182px">Maximum</div>
  <div class="t val red" style="top:182px">107.9 MPa *</div>
  <div class="t lab" style="top:228px">Average</div>
  <div class="t val" style="top:228px">11.14 MPa *</div>
  <div class="t lab blu" style="top:274px">Minimum</div>
  <div class="t val blu" style="top:274px">1.899e-11 MPa *</div>
  <div class="t lab" style="top:323px">Highlight in Model</div>
  <div style="position:absolute;left:400px;top:328px;width:38px;height:14px;border-radius:7px;background:#ececec"></div>
  <div style="position:absolute;left:412px;top:322px;width:27px;height:27px;border-radius:50%;background:#0f76ad"></div>
  <div class="hr" style="top:375px"></div>
  <div class="t lab" style="top:399px">Integral</div>
  <div class="t val" style="top:399px">-5.059e-3 (MPa)·m<span style="font-size:12.5px;position:relative;top:-8px">3</span> *</div>
  <div class="hr" style="top:448px"></div>
  <div class="t" style="left:19px;top:466px;font-style:italic;font-size:19px;line-height:22px;letter-spacing:-.56px">*Statistics are based on interpolated data. <span class="blu">Learn more</span></div>
  <svg class="abs" style="left:0;top:0" width="471" height="505" viewBox="0 0 471 505" fill="none" stroke="#4a4a4a" stroke-width="1.5" stroke-linejoin="round">
    <g id="cp1" transform="translate(429 148)"><path d="M-3.5 -5.5 v-3 h7.5 l3.5 3.5 v10.5 h-3.5"/><path d="M-7 -5.5 h11 v14.5 h-11z" fill="#fff"/><path d="M3.6 -8.5 v3.6 h3.6"/></g>
    <g transform="translate(429 194)"><path d="M-3.5 -5.5 v-3 h7.5 l3.5 3.5 v10.5 h-3.5"/><path d="M-7 -5.5 h11 v14.5 h-11z" fill="#fff"/><path d="M3.6 -8.5 v3.6 h3.6"/></g>
    <g transform="translate(429 240)"><path d="M-3.5 -5.5 v-3 h7.5 l3.5 3.5 v10.5 h-3.5"/><path d="M-7 -5.5 h11 v14.5 h-11z" fill="#fff"/><path d="M3.6 -8.5 v3.6 h3.6"/></g>
    <g transform="translate(429 286)"><path d="M-3.5 -5.5 v-3 h7.5 l3.5 3.5 v10.5 h-3.5"/><path d="M-7 -5.5 h11 v14.5 h-11z" fill="#fff"/><path d="M3.6 -8.5 v3.6 h3.6"/></g>
    <g transform="translate(429 412)"><path d="M-3.5 -5.5 v-3 h7.5 l3.5 3.5 v10.5 h-3.5"/><path d="M-7 -5.5 h11 v14.5 h-11z" fill="#fff"/><path d="M3.6 -8.5 v3.6 h3.6"/></g>
  </svg>
</div>

<!-- right column -->
<div class="card" style="top:136px;height:119px">
  <svg class="abs" style="left:22px;top:22px" width="18" height="14" viewBox="0 0 18 14" fill="none" stroke="#555" stroke-width="1.6"><path d="M2 3.5 L9 10.5 L16 3.5"/></svg>
  <div class="hd" style="top:18px">MESH</div>
  <div style="position:absolute;left:0;top:60px;width:384px;height:44px;background:#fde8e2"></div>
  <svg class="abs" style="left:26px;top:62px" width="16" height="24" viewBox="0 0 16 24" fill="none" stroke="#d2d2d2" stroke-width="1.3"><path d="M4 0 V20 H12"/></svg>
  <svg class="abs" style="left:55px;top:70px" width="26" height="26" viewBox="0 0 26 26"><path d="M13 2 L24 7 L13 12 L2 7Z" fill="#d9d9d9"/><path d="M2 7 L13 12 V24 L2 19Z" fill="#8f8f8f"/><path d="M24 7 L13 12 V24 L24 19Z" fill="#bdbdbd"/></svg>
  <div style="position:absolute;left:92px;top:70px;font-size:21px;line-height:26px;color:#d5562a;letter-spacing:-.2px">Part 1</div>
</div>
<div class="card" style="top:263px;height:145px">
  <svg class="abs" style="left:22px;top:23px" width="18" height="14" viewBox="0 0 18 14" fill="none" stroke="#555" stroke-width="1.6"><path d="M2 3.5 L9 10.5 L16 3.5"/></svg>
  <div class="hd" style="top:18px;letter-spacing:-.9px">STEPS</div>
  <svg class="abs" style="left:30px;top:74px" width="170" height="24" viewBox="0 0 170 24" fill="none" stroke="#cbcbcb" stroke-width="1.4">
    <path d="M5 5 V19 M8 12 H23 M13.5 6.5 L8 12 L13.5 17.5"/>
    <path d="M48 12 H67 M54.5 5.5 L48 12 L54.5 18.5"/>
    <path d="M92 12 H111 M104.5 5.5 L111 12 L104.5 18.5"/>
    <path d="M153 5 V19 M135 12 H150 M144.500 6.5 L150 12 L144.5 17.5"/>
  </svg>
  <div style="position:absolute;left:218px;top:73px;font-size:21px;line-height:26px;color:#333">0</div>
  <div style="position:absolute;left:212px;top:110px;width:151px;height:1px;background:#d6d6d6"></div>
</div>
<!-- splitter handle -->
<div style="position:absolute;left:1526px;top:259px;width:2px;height:26px;background:#c9c9c9"></div>
<div style="position:absolute;left:1530px;top:259px;width:2px;height:26px;background:#c9c9c9"></div>

<!-- view cubes (top-right of viewer) -->
<svg class="abs" style="left:940px;top:149px" width="150" height="52" viewBox="0 0 150 52" fill="none">
  <path d="M65.500 4 V48" stroke="#efefef" stroke-width="1"/>
  <path d="M139.500 4 V48" stroke="#efefef" stroke-width="1"/>
  <g stroke="#555" stroke-width="1.3" stroke-linejoin="round">
    <path d="M27 13 L37 18 V31 L27 36 L17 31 V18Z M17 18 L27 23.500 L37 18 M27 23.500 V36"/>
    <path d="M27 10 V13 M14.500 32.500 L17 31 M39.500 32.500 L37 31" />
  </g>
  <path d="M48 40 V45 H43" stroke="#999" stroke-width="1.2"/>
  <g stroke="#555" stroke-width="1.2" stroke-linejoin="round">
    <path d="M99 13 L109 18 L99 23.500 L89 18Z" fill="#e2e2e2"/>
    <path d="M89 18 L99 23.500 V36 L89 31Z" fill="#8d8d8d"/>
    <path d="M109 18 L99 23.500 V36 L109 31Z" fill="#b9b9b9"/>
  </g>
  <path d="M121 40 V45 H116" stroke="#999" stroke-width="1.2"/>
</svg>

<!-- left edge handle -->
<div style="position:absolute;left:0;top:594px;width:2px;height:26px;background:#d0d0d0"></div>

<!-- chat bubble -->
<div style="position:absolute;left:1804px;top:691px;width:98px;height:98px;border-radius:50%;background:#0a77ae;box-shadow:0 4px 14px rgba(0,0,0,.18)"></div>
<svg class="abs" style="left:1804px;top:691px" width="98" height="98" viewBox="0 0 98 98">
  <path d="M31 23 H66 Q72 23 72 29 V76 Q64 70 56 70 H31 Q25 70 25 64 V29 Q25 23 31 23Z" fill="#fff"/>
  <path d="M33 55 Q48.500 66 64 55" fill="none" stroke="#0a77ae" stroke-width="2.6" stroke-linecap="round"/>
</svg>

<svg class="abs" style="left:0;top:900px" width="1920" height="189" viewBox="0 900 1920 189">
<rect x="509.20" y="1040" width="24.89" height="24" fill="#0000ff"/>
<rect x="533.79" y="1040" width="24.89" height="24" fill="#0a2df0"/>
<rect x="558.38" y="1040" width="24.89" height="24" fill="#0a55f0"/>
<rect x="582.97" y="1040" width="24.89" height="24" fill="#0a78f0"/>
<rect x="607.56" y="1040" width="24.89" height="24" fill="#0a8ef0"/>
<rect x="632.15" y="1040" width="24.89" height="24" fill="#0aa5f5"/>
<rect x="656.74" y="1040" width="24.89" height="24" fill="#05b8f5"/>
<rect x="681.33" y="1040" width="24.89" height="24" fill="#05ccf5"/>
<rect x="705.92" y="1040" width="24.89" height="24" fill="#00e8fa"/>
<rect x="730.51" y="1040" width="24.89" height="24" fill="#05eac0"/>
<rect x="755.10" y="1040" width="24.89" height="24" fill="#00e850"/>
<rect x="779.69" y="1040" width="24.89" height="24" fill="#28e800"/>
<rect x="804.28" y="1040" width="24.89" height="24" fill="#a0f020"/>
<rect x="828.87" y="1040" width="24.89" height="24" fill="#fff018"/>
<rect x="853.46" y="1040" width="24.89" height="24" fill="#ffd810"/>
<rect x="878.05" y="1040" width="24.89" height="24" fill="#ffbc08"/>
<rect x="902.64" y="1040" width="24.89" height="24" fill="#ff9808"/>
<rect x="927.23" y="1040" width="24.89" height="24" fill="#ff7808"/>
<rect x="951.82" y="1040" width="24.89" height="24" fill="#ff4808"/>
<rect x="976.41" y="1040" width="24.89" height="24" fill="#ff0000"/>
<path d="M510.5 1025 V1040" stroke="#6a6a6a" stroke-width="1.6"/>
<path d="M530.1 1030.500 V1040" stroke="#a8a8a8" stroke-width="1.4"/>
<path d="M549.7 1030.500 V1040" stroke="#a8a8a8" stroke-width="1.4"/>
<path d="M569.2 1030.500 V1040" stroke="#a8a8a8" stroke-width="1.4"/>
<path d="M588.8 1030.500 V1040" stroke="#a8a8a8" stroke-width="1.4"/>
<path d="M608.4 1025 V1040" stroke="#6a6a6a" stroke-width="1.6"/>
<path d="M628.0 1030.500 V1040" stroke="#a8a8a8" stroke-width="1.4"/>
<path d="M647.6 1030.500 V1040" stroke="#a8a8a8" stroke-width="1.4"/>
<path d="M667.1 1030.500 V1040" stroke="#a8a8a8" stroke-width="1.4"/>
<path d="M686.7 1030.500 V1040" stroke="#a8a8a8" stroke-width="1.4"/>
<path d="M706.3 1025 V1040" stroke="#6a6a6a" stroke-width="1.6"/>
<path d="M725.9 1030.500 V1040" stroke="#a8a8a8" stroke-width="1.4"/>
<path d="M745.5 1030.500 V1040" stroke="#a8a8a8" stroke-width="1.4"/>
<path d="M765.0 1030.500 V1040" stroke="#a8a8a8" stroke-width="1.4"/>
<path d="M784.6 1030.500 V1040" stroke="#a8a8a8" stroke-width="1.4"/>
<path d="M804.2 1025 V1040" stroke="#6a6a6a" stroke-width="1.6"/>
<path d="M823.8 1030.500 V1040" stroke="#a8a8a8" stroke-width="1.4"/>
<path d="M843.4 1030.500 V1040" stroke="#a8a8a8" stroke-width="1.4"/>
<path d="M862.9 1030.500 V1040" stroke="#a8a8a8" stroke-width="1.4"/>
<path d="M882.5 1030.500 V1040" stroke="#a8a8a8" stroke-width="1.4"/>
<path d="M902.1 1025 V1040" stroke="#6a6a6a" stroke-width="1.6"/>
<path d="M921.7 1030.500 V1040" stroke="#a8a8a8" stroke-width="1.4"/>
<path d="M941.3 1030.500 V1040" stroke="#a8a8a8" stroke-width="1.4"/>
<path d="M960.8 1030.500 V1040" stroke="#a8a8a8" stroke-width="1.4"/>
<path d="M980.4 1030.500 V1040" stroke="#a8a8a8" stroke-width="1.4"/>
<path d="M1000.0 1025 V1040" stroke="#6a6a6a" stroke-width="1.6"/>
<path d="M499.400 1079 L509.200 1067 L519 1079Z" fill="#000"/>
<path d="M990.700 1079 L1000.500 1067 L1010.300 1079Z" fill="#000"/>
<path d="M448.500 1019.500 H564 M969.800 1019.500 H1038.700" stroke="#e1e1e1" stroke-width="1"/>
<path d="M806.500 968.500 H936.600" stroke="#dcdcdc" stroke-width="1"/>
<path d="M918.500 939.500 L925 946 L931.500 939.500" fill="none" stroke="#555" stroke-width="1.5"/>
<circle cx="759.800" cy="943.700" r="11" fill="#fff" stroke="#cfcfcf" stroke-width="1.2"/>
<path d="M755 939.700 h9.600 M755 943.700 h9.600 M755 947.700 h9.600" stroke="#555" stroke-width="1.5"/>
</svg>
<div class="abs" style="left:581px;top:930px;font-weight:bold;font-size:20.5px;line-height:28px;color:#333;white-space:nowrap;letter-spacing:-.5px">Von Mises Stress</div>
<div class="abs" style="left:814px;top:930px;font-size:20.5px;line-height:28px;color:#333;white-space:nowrap">MPa</div>
<div class="abs lt" style="left:505.0px;top:997px;font-size:17.5px;line-height:24px;color:#333;white-space:nowrap;transform:translateX(-50%)">1.899e-11</div>
<div class="abs lt" style="left:612.2px;top:997px;font-size:17.5px;line-height:24px;color:#333;white-space:nowrap;transform:translateX(-50%)">21.6</div>
<div class="abs lt" style="left:707.3px;top:997px;font-size:17.5px;line-height:24px;color:#333;white-space:nowrap;transform:translateX(-50%)">43.2</div>
<div class="abs lt" style="left:802.8px;top:997px;font-size:17.5px;line-height:24px;color:#333;white-space:nowrap;transform:translateX(-50%)">64.7</div>
<div class="abs lt" style="left:898.0px;top:997px;font-size:17.5px;line-height:24px;color:#333;white-space:nowrap;transform:translateX(-50%)">86.3</div>
<div class="abs lt" style="left:1005.5px;top:997px;font-size:17.5px;line-height:24px;color:#333;white-space:nowrap;transform:translateX(-50%)">107.9</div>
<svg class="abs" style="left:1630px;top:790px" width="290" height="280" viewBox="1630 790 290 280" fill="none">
  <g stroke="#555" stroke-width="1.6" stroke-linecap="round" stroke-linejoin="round">
    <path d="M1766.500 809.500 L1774.300 802 L1782 809.500"/>
    <path d="M1766.500 1048 L1774.300 1055.500 L1782 1048"/>
    <path d="M1654 921 L1647 929 L1654 937"/>
    <path d="M1894 921 L1901 929 L1894 937"/>
  </g>
  <!-- camera -->
  <g stroke="#555" stroke-width="1.5" stroke-linejoin="round">
    <rect x="1672.500" y="841.500" width="13.500" height="12.500" rx="3"/>
    <path d="M1686 846 L1691.500 843 V852.500 L1686 849.500"/>
  </g>
  <!-- home -->
  <g stroke="#555" stroke-width="1.4" stroke-linejoin="round">
    <path d="M1845.500 848.500 L1854.200 840 L1863 848.500"/>
    <path d="M1848 847 V857 H1852 V851 H1856.500 V857 H1860.500 V847"/>
  </g>
  <!-- rotate icons -->
  <g stroke="#555" stroke-width="1.3">
    <path d="M1690 1004.500 A9 9 0 1 1 1681 1018"/>
    <path d="M1676.500 1010 l5.500 7 l1.500 -7.500z" fill="#333" stroke="none"/>
    <path d="M1853 1004.500 A9 9 0 1 0 1862 1018"/>
    <path d="M1866.500 1010 l-5.500 7 l-1.500 -7.500z" fill="#333" stroke="none"/>
  </g>
  <!-- cube -->
  <g stroke="#b9b9b9" stroke-width="1.1" stroke-linejoin="round">
    <path d="M1709.300 894.300 L1740.800 859.700 L1833.400 872.700 L1803 904.200Z" fill="rgba(255,255,255,.55)"/>
    <path d="M1803 904.200 L1833.400 872.700 V963.300 L1803 996.800Z" fill="rgba(255,255,255,.5)"/>
    <path d="M1709.300 894.300 L1803 904.200 V996.800 L1709.300 986Z" fill="rgba(255,255,255,.6)"/>
    <path d="M1740.800 859.700 V952 L1833.400 963.300 M1740.800 952 L1709.300 986" stroke-dasharray="4 3" stroke="#d4d4d4"/>
  </g>
  <!-- axes -->
  <path d="M1700.600 991 V856" stroke="#5ee06e" stroke-width="1.5"/>
  <path d="M1700.600 846 l-3.300 13 h6.600z" fill="#7ff08c"/>
  <path d="M1700.600 991 L1752 933" stroke="#f08a8a" stroke-width="1.2"/>
  <path d="M1700.600 991 L1832 1008.500" stroke="#5b5bf5" stroke-width="1.5"/>
  <path d="M1843 1010 l-13 -5 l-1 6.500z" fill="#6a6af8"/>
  <text x="1694" y="838" font-family="Liberation Sans,Arial,sans-serif" font-size="23" fill="#4edc60">y</text>
  <text x="1748" y="939" font-family="Liberation Sans,Arial,sans-serif" font-size="19" fill="#f27878">X</text>
  <text x="1857" y="1021" font-family="Liberation Sans,Arial,sans-serif" font-size="21" fill="#4a4af0">Z</text>
  <text transform="matrix(1 .105 0 1 1729 948)" font-family="Liberation Sans,Arial,sans-serif" font-size="15.500" fill="#666" textLength="51" lengthAdjust="spacingAndGlyphs">FRONT</text>
  <text transform="matrix(.55 .08 -.55 .62 1777 882)" font-family="Liberation Sans,Arial,sans-serif" font-size="14" fill="#888" text-anchor="middle">TOP</text>
  <text transform="matrix(.33 -.36 0 1 1812 942)" font-family="Liberation Sans,Arial,sans-serif" font-size="13" fill="#888">RIGHT</text>
</svg>

<style>
.lbl{position:absolute;background:#fff;border:1px solid #e4e4e4;border-radius:4px;box-shadow:0 1px 4px rgba(0,0,0,.18);font-size:17.5px;line-height:25px;white-space:pre;letter-spacing:-.3px;-webkit-text-stroke:.3px currentColor}
.num{position:absolute;font-weight:bold;font-size:55px;line-height:56px;color:#000;white-space:nowrap;transform:translateX(-50%)}
</style>
<div class="lbl" style="left:397px;top:608px;width:110px;height:58px;padding:2px 0 0 9px;color:#d8404c">Max:
 107.9 MPa</div>
<div class="lbl" style="left:590px;top:828px;width:144px;height:56px;padding:1px 0 0 7px;color:#2a7fae">Min:
 1.899e-11 MPa</div>

<svg class="abs" style="left:0;top:0" width="1920" height="1089" viewBox="0 0 1920 1089">
  <defs>
    <filter id="ash" x="-10%" y="-10%" width="120%" height="120%"><feGaussianBlur in="SourceAlpha" stdDeviation="2.5"/><feOffset dx="0" dy="3"/><feComponentTransfer><feFuncA type="linear" slope=".45"/></feComponentTransfer><feMerge><feMergeNode/><feMergeNode in="SourceGraphic"/></feMerge></filter>
  </defs>
  <g filter="url(#ash)" fill="#f4594c" stroke="#f4594c" stroke-linecap="round" stroke-linejoin="round">
    <path d="M285 304.500 L499 136" stroke-width="7" fill="none"/>
    <path d="M511.500 124 L483 129 L497.500 137.300 L501.500 154Z" stroke-width="2.500"/>
    <path d="M1726 473 L1695.500 281" stroke-width="7" fill="none"/>
    <path d="M1693.500 261.500 L1680.500 290 L1696 280.500 L1713.500 284.500Z" stroke-width="2.500"/>
    <path d="M1333.500 778 L1433.500 591" stroke-width="7" fill="none"/>
    <path d="M1440.500 577 L1415.500 592 L1433 591.500 L1442.500 608Z" stroke-width="2.500"/>
  </g>
  <!-- mouse cursor (hand) -->
  <g transform="translate(800 329)" stroke="#0b0b1a" stroke-width="1.700" stroke-linejoin="round" fill="#fff">
    <path d="M6.800 0.900 C8.200 0.600 9 1.400 9.300 2.600 L10.900 8.600 C11.600 7.600 12.800 7.500 13.400 8 C14.100 8.500 14.600 9.200 15.300 9.400 C15.900 8.400 17 8 17.700 8.500 C18.400 9 18.700 9.700 19.300 10 C20 9.100 21 8.800 21.700 9.300 C23 10.100 23.700 11 23.600 12.500 C23.500 15 23.200 17 22.500 19.100 C21.600 21.700 20 24 18.200 25.700 L10.900 25.700 C9.800 25 9 24.300 8.200 23.300 L3.200 16.900 C2 15.600 .8 14.600 .4 13.500 C.1 12.500 .6 12 1.300 11.900 C3 11.600 4.600 12.600 5.900 13.800 L7 12.400 L5.300 3 C5.100 1.900 5.700 1.100 6.800 0.900Z"/>
    <path d="M11.700 15 V20.500 M14.700 15 V20.500 M17.900 15 V20.500" stroke-width="1.500" fill="none"/>
  </g>
</svg>
<div class="num" id="n1" style="left:269px;top:313.500px;clip-path:polygon(0 0,32px 0,32px 39.500px,20.700px 39.500px,20.700px 56px,12.600px 56px,12.600px 39.500px,0 39.500px)">1</div>
<div class="num" style="left:1735.500px;top:493px">2</div>
<div class="num" style="left:1335px;top:802px">3</div>

</body>
</html>
